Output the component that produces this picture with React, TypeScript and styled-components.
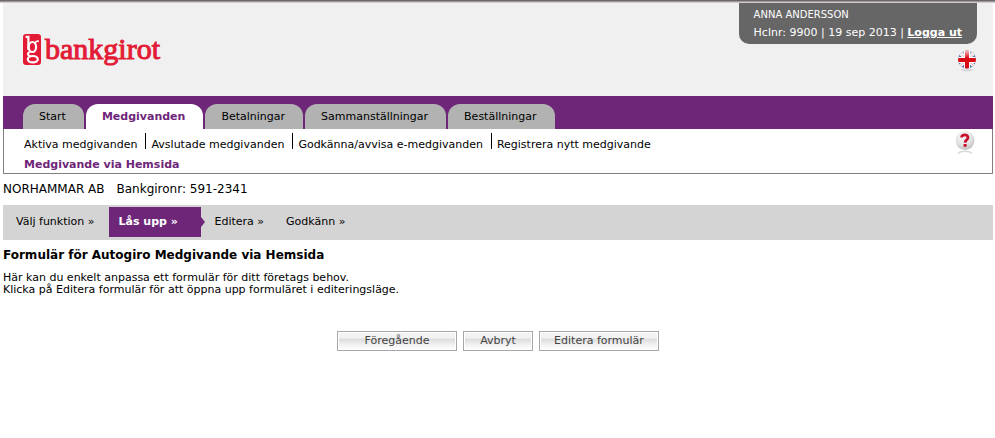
import React from "react";
import styled, { createGlobalStyle } from "styled-components";

const purple = "#6e2679";

const GlobalStyle = createGlobalStyle`
  * { box-sizing: border-box; }
  body {
    margin: 0;
    background: #fff;
    color: #000;
    font-family: Verdana, "DejaVu Sans", sans-serif;
    font-size: 11px;
    line-height: 16px;
  }
`;

const TopEdge = styled.div`
  height: 3px;
  background: linear-gradient(#6b676b 0 1px, #9a969a 1px 2px, #cfcccf 2px 3px);
`;

const Page = styled.div`
  margin: 0 2px 0 3px;
`;

const Header = styled.header`
  display: flex;
  justify-content: space-between;
  align-items: flex-start;
  min-height: 93px;
  background: #f0f0f0;
`;

const Brand = styled.a`
  display: flex;
  align-items: center;
  gap: 4px;
  padding: 30px 0 0 20px;
  color: #e31b36;
  text-decoration: none;
`;

const BrandName = styled.span`
  font-family: "Liberation Serif", "Times New Roman", serif;
  font-size: 30px;
  line-height: 32px;
  -webkit-text-stroke: 1px #e31b36;
`;

const Session = styled.div`
  display: flex;
  flex-direction: column;
  align-items: flex-end;
  gap: 6px;
  padding-right: 16px;
`;

const UserBox = styled.div`
  min-height: 41px;
  padding: 3px 15px 2px;
  border-radius: 0 0 10px 10px;
  background: #666;
  color: #fff;
  line-height: 18px;
`;

const UserName = styled.div`
  font-size: 10px;
`;

const LogoutLink = styled.a`
  color: #fff;
  font-weight: bold;
`;

const IconButton = styled.button`
  display: block;
  padding: 0;
  border: 0;
  background: none;
  cursor: pointer;
  line-height: 0;
`;

const TabBar = styled.nav`
  display: flex;
  gap: 2px;
  padding: 8px 20px 0;
  background: ${purple};
`;

const Tab = styled.a<{ $active?: boolean }>`
  height: 25px;
  padding: 0 18px 0 16px;
  border-radius: 12px 12px 0 0;
  background: ${(p) => (p.$active ? "#fff" : "#b2b2b2")};
  color: ${(p) => (p.$active ? purple : "#000")};
  font-weight: ${(p) => (p.$active ? "bold" : "normal")};
  line-height: 25px;
  text-decoration: none;
`;

const SubMenu = styled.div`
  display: flex;
  justify-content: space-between;
  align-items: flex-start;
  min-height: 45px;
  padding: 2px 17px 0 20px;
  border: 1px solid #808080;
  border-top: 0;
`;

const SubLinks = styled.nav`
  padding-top: 2px;
`;

const SubRow = styled.div`
  display: flex;
`;

const SubLink = styled.a<{ $active?: boolean }>`
  color: ${(p) => (p.$active ? purple : "#000")};
  font-weight: ${(p) => (p.$active ? "bold" : "normal")};
  line-height: ${(p) => (p.$active ? "16px" : "24px")};
  text-decoration: none;
`;

const Divider = styled.span`
  width: 1px;
  height: 16px;
  margin: 0 5px 0 8px;
  background: #000;
`;

const Company = styled.div`
  display: flex;
  gap: 12px;
  padding: 7px 0 8px;
  font-size: 12px;
`;

const Steps = styled.ol`
  display: flex;
  align-items: flex-start;
  min-height: 35px;
  margin: 0;
  padding: 2px 0 0 13px;
  list-style: none;
  background: #d4d4d4;
`;

const Step = styled.li`
  margin-right: 22px;
  line-height: 30px;
  &:first-child { margin-right: 14px; }
`;

const CurrentStep = styled.li`
  position: relative;
  min-width: 92px;
  height: 30px;
  margin-right: 14px;
  padding-left: 10px;
  background: ${purple};
  color: #fff;
  font-weight: bold;
  line-height: 29px;

  &::after {
    content: "";
    position: absolute;
    left: 100%;
    top: 10px;
    border: 5px solid transparent;
    border-left: 4px solid ${purple};
    border-right: 0;
  }
`;

const Title = styled.h1`
  margin: 7px 0 9px;
  font-size: 12px;
  line-height: 16px;
`;

const Intro = styled.p`
  margin: 0;
  line-height: 12px;
`;

const Actions = styled.div`
  display: flex;
  justify-content: center;
  gap: 6px;
  margin-top: 35px;
`;

const ActionButton = styled.button<{ $short?: boolean }>`
  width: ${(p) => (p.$short ? 70 : 120)}px;
  height: 20px;
  padding: 0;
  border: 1px solid #a7a6aa;
  background: linear-gradient(#f3f3f3 0 30%, #dedede 42%, #f0f0f0 68%, #fff);
  box-shadow: inset 0 0 0 1px #fff;
  color: #444;
  font-family: inherit;
  font-size: 11px;
  line-height: 18px;
  cursor: pointer;
`;

const BrandMark = () => (
  <svg width="18" height="31" viewBox="0 0 18 31" aria-hidden="true">
    <rect width="18" height="31" rx="3" fill="#e31b36" />
    <g fill="none" stroke="#fff">
      <path d="M2.6 2.8H5.4V16" strokeWidth="2.2" />
      <ellipse cx="9.4" cy="13" rx="3.7" ry="5" strokeWidth="2.2" />
      <path d="M12 9.5C12.4 7.4 14 6.8 15.8 7.4" strokeWidth="1.8" />
      <path d="M6.6 18C4 19.4 4.4 21.8 7.4 21.8" strokeWidth="2" />
      <ellipse cx="9.8" cy="25.2" rx="5" ry="3.2" strokeWidth="2.2" />
    </g>
  </svg>
);

const FlagIcon = () => (
  <svg width="20" height="22" viewBox="0 0 20 22" aria-hidden="true">
    <defs>
      <clipPath id="flagDisc"><circle cx="10" cy="9.5" r="9" /></clipPath>
      <linearGradient id="flagGloss" x2="0" y2="1">
        <stop stopColor="#fff" stopOpacity=".8" />
        <stop offset="1" stopColor="#fff" stopOpacity="0" />
      </linearGradient>
    </defs>
    <ellipse cx="10" cy="20" rx="6" ry="1.4" fill="#dadada" />
    <g clipPath="url(#flagDisc)">
      <rect width="20" height="19" fill="#4a659f" />
      <path d="M0 0L20 19M20 0L0 19" stroke="#fff" strokeWidth="3.4" />
      <path d="M0 0L20 19M20 0L0 19" stroke="#e89498" strokeWidth="1" />
      <path d="M10 0V19M0 10H20" stroke="#fff" strokeWidth="6" />
      <path d="M10 0V19M0 10H20" stroke="#da0a14" strokeWidth="4" />
      <rect width="20" height="8" fill="url(#flagGloss)" />
    </g>
  </svg>
);

const HelpIcon = () => (
  <svg width="20" height="24" viewBox="0 0 20 24" aria-hidden="true">
    <defs>
      <radialGradient id="helpBall" cx=".42" cy=".3" r=".75">
        <stop stopColor="#fafafa" />
        <stop offset=".6" stopColor="#e2e2e2" />
        <stop offset="1" stopColor="#b8b8b8" />
      </radialGradient>
    </defs>
    <circle cx="10" cy="9.5" r="9.4" fill="url(#helpBall)" />
    <path d="M3 22.5C6 19.5 14 19.5 17 22.5" fill="none" stroke="#d9d9d9" strokeWidth="1.4" />
    <path d="M6.6 6.5C6.6 2.9 13.2 3 13 6.6C12.9 8.8 10.2 8.8 10.1 11.6" fill="none" stroke="#c8102e" strokeWidth="2.8" />
    <rect x="8.6" y="13" width="3" height="2.8" fill="#c8102e" />
  </svg>
);

const tabs = ["Start", "Medgivanden", "Betalningar", "Sammanställningar", "Beställningar"];
const subLinks = [
  "Aktiva medgivanden",
  "Avslutade medgivanden",
  "Godkänna/avvisa e-medgivanden",
  "Registrera nytt medgivande",
];

export default function App() {
  return (
    <>
      <GlobalStyle />
      <TopEdge />
      <Page>
        <Header>
          <Brand href="#">
            <BrandMark />
            <BrandName>bankgirot</BrandName>
          </Brand>
          <Session>
            <UserBox>
              <UserName>ANNA ANDERSSON</UserName>
              <div>
                Hclnr: 9900 | 19 sep 2013 | <LogoutLink href="#">Logga ut</LogoutLink>
              </div>
            </UserBox>
            <IconButton type="button" aria-label="English">
              <FlagIcon />
            </IconButton>
          </Session>
        </Header>
        <TabBar>
          {tabs.map((t) => (
            <Tab key={t} href="#" $active={t === "Medgivanden"}>{t}</Tab>
          ))}
        </TabBar>
        <SubMenu>
          <SubLinks>
            <SubRow>
              {subLinks.map((l, i) => (
                <React.Fragment key={l}>
                  {i > 0 && <Divider />}
                  <SubLink href="#">{l}</SubLink>
                </React.Fragment>
              ))}
            </SubRow>
            <SubRow>
              <SubLink href="#" $active>Medgivande via Hemsida</SubLink>
            </SubRow>
          </SubLinks>
          <IconButton type="button" aria-label="Hjälp">
            <HelpIcon />
          </IconButton>
        </SubMenu>
        <Company>
          <span>NORHAMMAR AB</span>
          <span>Bankgironr: 591-2341</span>
        </Company>
        <Steps>
          <Step>Välj funktion »</Step>
          <CurrentStep aria-current="step">Lås upp »</CurrentStep>
          <Step>Editera »</Step>
          <Step>Godkänn »</Step>
        </Steps>
        <main>
          <Title>Formulär för Autogiro Medgivande via Hemsida</Title>
          <Intro>
            Här kan du enkelt anpassa ett formulär för ditt företags behov.
            <br />
            Klicka på Editera formulär för att öppna upp formuläret i editeringsläge.
          </Intro>
          <Actions>
            <ActionButton type="button">Föregående</ActionButton>
            <ActionButton type="button" $short>Avbryt</ActionButton>
            <ActionButton type="button">Editera formulär</ActionButton>
          </Actions>
        </main>
      </Page>
    </>
  );
}
